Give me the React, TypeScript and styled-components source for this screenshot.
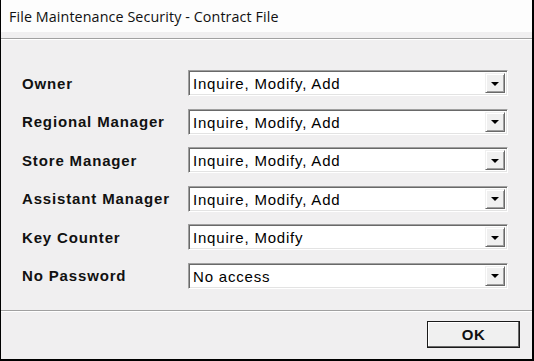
import React from "react";
import styled, { createGlobalStyle } from "styled-components";

const Global = createGlobalStyle`
  html, body { margin: 0; padding: 0; background: #ffffff; }
  body { font-family: "Liberation Sans", Arial, sans-serif; }
`;

const Window = styled.div`
  box-sizing: border-box;
  width: 534px;
  height: 361px;
  background: #f0eff0;
  border-right: 2px solid #000;
  border-bottom: 2px solid #000;
  border-left: 1px solid #000;
  display: flex;
  flex-direction: column;
`;

const TitleBar = styled.div`
  height: 32px;
  background: #fdfdfd;
  display: flex;
  align-items: center;
  padding-left: 8px;
  font-family: "Open Sans", "Noto Sans", sans-serif;
  font-size: 14.3px;
  letter-spacing: 0.1px;
  color: #111;
`;

const Separator = styled.div<{ $top: number }>`
  margin-top: ${(p) => p.$top}px;
  height: 0;
  border-top: 1px solid #a0a0a0;
  border-bottom: 1px solid #ffffff;
`;

const Form = styled.div`
  display: grid;
  grid-template-columns: 166px 320px;
  grid-auto-rows: 26px;
  row-gap: 12.6px;
  align-content: start;
  padding: 30px 0 0 21px;
  height: 270px;
  box-sizing: border-box;
`;

const Label = styled.div`
  display: flex;
  align-items: center;
  font-weight: bold;
  font-size: 15px;
  letter-spacing: 0.85px;
  color: #111;
  white-space: nowrap;
`;

const Combo = styled.div`
  box-sizing: border-box;
  height: 26px;
  display: flex;
  align-items: stretch;
  background: #ffffff;
  border-top: 1px solid #a0a0a0;
  border-left: 1px solid #a0a0a0;
  border-right: 1px solid #ffffff;
  border-bottom: 1px solid #ffffff;
  box-shadow: inset 1px 1px 0 #696969, inset -1px -1px 0 #e3e3e3;
`;

const ComboText = styled.div`
  flex: 1;
  display: flex;
  align-items: center;
  padding-left: 4px;
  padding-top: 1px;
  font-size: 15px;
  letter-spacing: 0.8px;
  color: #000;
  white-space: nowrap;
`;

const DropButton = styled.div`
  box-sizing: border-box;
  width: 20px;
  margin: 2px 2px 2px 0;
  background: #f0f0f0;
  border-top: 1px solid #f0f0f0;
  border-left: 1px solid #f0f0f0;
  border-right: 1px solid #696969;
  border-bottom: 1px solid #696969;
  box-shadow: inset 1px 1px 0 #ffffff, inset -1px -1px 0 #a0a0a0;
  display: flex;
  align-items: center;
  justify-content: center;
`;

const Arrow = styled.div`
  width: 0;
  height: 0;
  border-left: 4px solid transparent;
  border-right: 4px solid transparent;
  border-top: 4px solid #000;
  margin-top: 1px;
`;

const Footer = styled.div`
  flex: 1;
  display: flex;
  justify-content: flex-end;
  align-items: flex-start;
  padding: 9px 12px 0 0;
`;

const OkButton = styled.div`
  box-sizing: border-box;
  width: 93px;
  height: 27px;
  background: #f0f0f0;
  border: 1px solid #1a1a1a;
  box-shadow: inset -1px -1px 0 #696969, inset 1px 1px 0 #ffffff;
  display: flex;
  align-items: center;
  justify-content: center;
  font-weight: bold;
  font-size: 15px;
  letter-spacing: 0.5px;
  color: #111;
`;

const rows: [string, string][] = [
  ["Owner", "Inquire, Modify, Add"],
  ["Regional Manager", "Inquire, Modify, Add"],
  ["Store Manager", "Inquire, Modify, Add"],
  ["Assistant Manager", "Inquire, Modify, Add"],
  ["Key Counter", "Inquire, Modify"],
  ["No Password", "No access"],
];

export default function App() {
  return (
    <>
      <Global />
      <Window>
        <TitleBar>File Maintenance Security - Contract File</TitleBar>
        <Separator $top={6} />
        <Form>
          {rows.map(([label, value]) => (
            <React.Fragment key={label}>
              <Label>{label}</Label>
              <Combo>
                <ComboText>{value}</ComboText>
                <DropButton>
                  <Arrow />
                </DropButton>
              </Combo>
            </React.Fragment>
          ))}
        </Form>
        <Separator $top={0} />
        <Footer>
          <OkButton>OK</OkButton>
        </Footer>
      </Window>
    </>
  );
}
